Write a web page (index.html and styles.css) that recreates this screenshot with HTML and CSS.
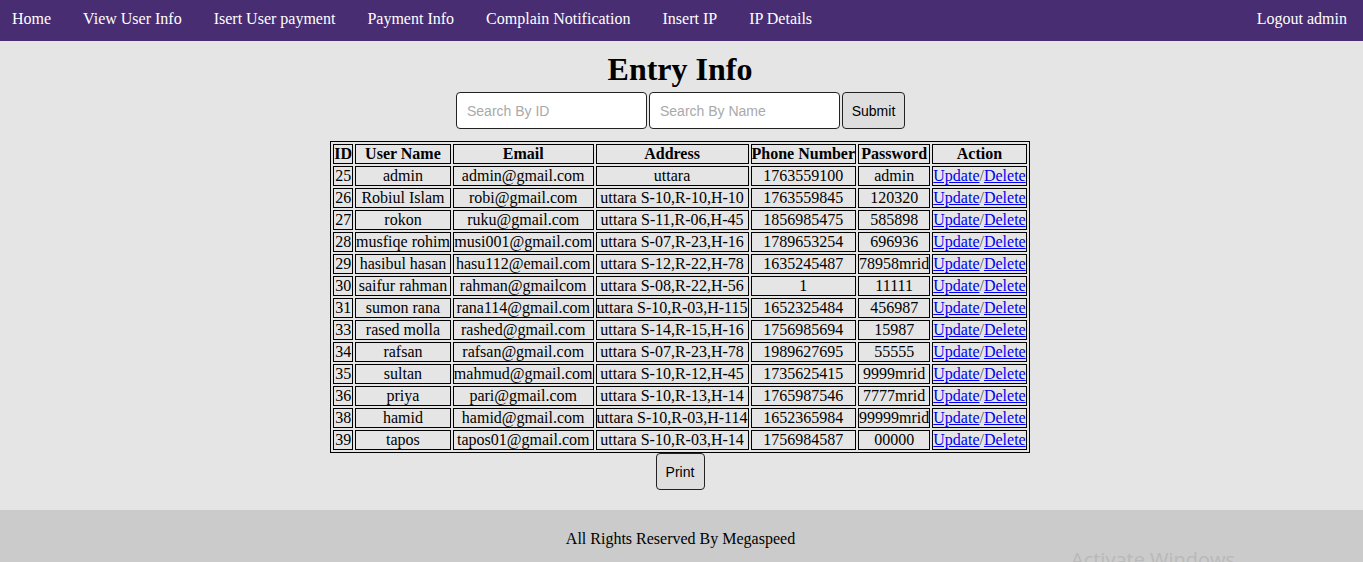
FILE: index.html
```html
<!DOCTYPE html>
<html>
<head>
<meta charset="utf-8">
<title>Entry Info</title>
<link rel="stylesheet" href="styles.css">
</head>
<body>
<nav class="topnav">
  <ul class="nav-left">
    <li><a href="#">Home</a></li>
    <li><a href="#">View User Info</a></li>
    <li><a href="#">Isert User payment</a></li>
    <li><a href="#">Payment Info</a></li>
    <li><a href="#">Complain Notification</a></li>
    <li><a href="#">Insert IP</a></li>
    <li><a href="#">IP Details</a></li>
  </ul>
  <a class="logout" href="#">Logout admin</a>
</nav>

<main class="content">
  <h1 class="title">Entry Info</h1>
  <form class="search">
    <input class="field" type="text" placeholder="Search By ID">
    <input class="field" type="text" placeholder="Search By Name">
    <button class="btn submit" type="button">Submit</button>
  </form>

  <table class="entries">
    <thead>
      <tr><th>ID</th><th>User Name</th><th>Email</th><th>Address</th><th>Phone Number</th><th>Password</th><th>Action</th></tr>
    </thead>
    <tbody>
      <tr><td>25</td><td>admin</td><td>admin@gmail.com</td><td>uttara</td><td>1763559100</td><td>admin</td><td><a href="#">Update</a>/<a href="#">Delete</a></td></tr>
      <tr><td>26</td><td>Robiul Islam</td><td>robi@gmail.com</td><td>uttara S-10,R-10,H-10</td><td>1763559845</td><td>120320</td><td><a href="#">Update</a>/<a href="#">Delete</a></td></tr>
      <tr><td>27</td><td>rokon</td><td>ruku@gmail.com</td><td>uttara S-11,R-06,H-45</td><td>1856985475</td><td>585898</td><td><a href="#">Update</a>/<a href="#">Delete</a></td></tr>
      <tr><td>28</td><td>musfiqe rohim</td><td>musi001@gmail.com</td><td>uttara S-07,R-23,H-16</td><td>1789653254</td><td>696936</td><td><a href="#">Update</a>/<a href="#">Delete</a></td></tr>
      <tr><td>29</td><td>hasibul hasan</td><td>hasu112@email.com</td><td>uttara S-12,R-22,H-78</td><td>1635245487</td><td>78958mrid</td><td><a href="#">Update</a>/<a href="#">Delete</a></td></tr>
      <tr><td>30</td><td>saifur rahman</td><td>rahman@gmailcom</td><td>uttara S-08,R-22,H-56</td><td>1</td><td>11111</td><td><a href="#">Update</a>/<a href="#">Delete</a></td></tr>
      <tr><td>31</td><td>sumon rana</td><td>rana114@gmail.com</td><td>uttara S-10,R-03,H-115</td><td>1652325484</td><td>456987</td><td><a href="#">Update</a>/<a href="#">Delete</a></td></tr>
      <tr><td>33</td><td>rased molla</td><td>rashed@gmail.com</td><td>uttara S-14,R-15,H-16</td><td>1756985694</td><td>15987</td><td><a href="#">Update</a>/<a href="#">Delete</a></td></tr>
      <tr><td>34</td><td>rafsan</td><td>rafsan@gmail.com</td><td>uttara S-07,R-23,H-78</td><td>1989627695</td><td>55555</td><td><a href="#">Update</a>/<a href="#">Delete</a></td></tr>
      <tr><td>35</td><td>sultan</td><td>mahmud@gmail.com</td><td>uttara S-10,R-12,H-45</td><td>1735625415</td><td>9999mrid</td><td><a href="#">Update</a>/<a href="#">Delete</a></td></tr>
      <tr><td>36</td><td>priya</td><td>pari@gmail.com</td><td>uttara S-10,R-13,H-14</td><td>1765987546</td><td>7777mrid</td><td><a href="#">Update</a>/<a href="#">Delete</a></td></tr>
      <tr><td>38</td><td>hamid</td><td>hamid@gmail.com</td><td>uttara S-10,R-03,H-114</td><td>1652365984</td><td>99999mrid</td><td><a href="#">Update</a>/<a href="#">Delete</a></td></tr>
      <tr><td>39</td><td>tapos</td><td>tapos01@gmail.com</td><td>uttara S-10,R-03,H-14</td><td>1756984587</td><td>00000</td><td><a href="#">Update</a>/<a href="#">Delete</a></td></tr>
    </tbody>
  </table>

  <button class="btn print" type="button">Print</button>
</main>

<footer class="footer">
  <p>All Rights Reserved By Megaspeed</p>
</footer>

<div class="watermark">Activate Windows</div>
</body>
</html>
```

FILE: styles.css
```css
html, body {
  margin: 0;
  padding: 0;
}
body {
  background: #e5e5e5;
  font-family: "Liberation Serif", "Times New Roman", serif;
  font-size: 16px;
  color: #000;
  overflow: hidden;
  height: 562px;
  position: relative;
}

.topnav {
  background: #482d72;
  height: 41px;
  display: flex;
  align-items: center;
  justify-content: space-between;
  padding: 0 16px 0 12px;
}
.nav-left {
  list-style: none;
  margin: 0;
  padding: 0;
  display: flex;
  gap: 32px;
}
.topnav a {
  color: #fff;
  text-decoration: none;
  font-size: 16px;
  line-height: 18px;
  position: relative;
  top: -2px;
}

.content {
  display: flex;
  flex-direction: column;
  align-items: center;
  padding-right: 3px;
}
.title {
  font-size: 32px;
  line-height: 37px;
  font-weight: bold;
  margin: 10px 0 4px;
}

.search {
  display: flex;
  gap: 2px;
  margin: 0 0 0 1px;
}
.field {
  width: 191px;
  height: 37px;
  box-sizing: border-box;
  border: 1px solid #222;
  border-radius: 4px;
  background: #fff;
  padding: 0 10px;
  font-family: "Liberation Sans", Arial, sans-serif;
  font-size: 14px;
  color: #000;
}
.field::placeholder {
  color: #a9a9a9;
}
.btn {
  height: 37px;
  box-sizing: border-box;
  border: 1px solid #222;
  border-radius: 4px;
  background: #dedede;
  padding: 0;
  font-family: "Liberation Sans", Arial, sans-serif;
  font-size: 14px;
  color: #000;
}
.submit {
  width: 63px;
}

.entries {
  margin-top: 12px;
  border: 1px solid #000;
  border-spacing: 2px;
  border-collapse: separate;
  font-size: 16px;
}
.entries th,
.entries td {
  border: 1px solid #000;
  padding: 0;
  line-height: 18px;
  text-align: center;
  white-space: nowrap;
}
.entries th {
  font-weight: bold;
}
.entries a {
  color: #0000ee;
  text-decoration: underline;
}
.entries td:last-child {
  color: #555;
}

.print {
  width: 49px;
}

.footer {
  margin-top: 20px;
  background: #cbcbcb;
  height: 60px;
  text-align: center;
}
.footer p {
  margin: 0;
  padding-top: 20px;
  line-height: 18px;
  padding-right: 2px;
}

.watermark {
  position: absolute;
  left: 1071px;
  top: 546px;
  font-family: "Open Sans", "Noto Sans", sans-serif;
  font-size: 20px;
  color: #b9b9b9;
  white-space: nowrap;
}
```
